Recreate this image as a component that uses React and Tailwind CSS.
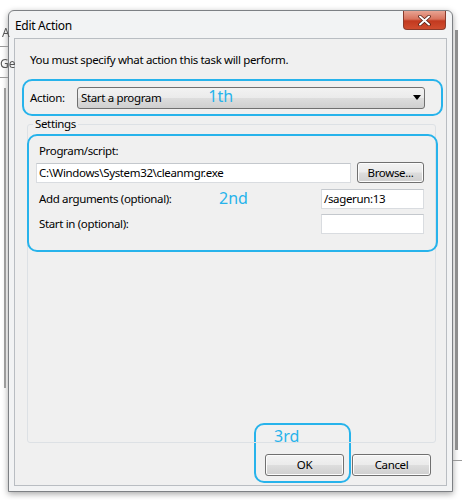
import React from 'react';

const ui = { fontFamily: '"Noto Sans", "Open Sans", sans-serif' };

function Win7Button({ children, className = '' }) {
    return (
        <div
            className={`flex items-center justify-center rounded-[3px] border border-[#707070] bg-[linear-gradient(#f3f3f3_0%,#ebebeb_48%,#dddddd_52%,#cfcfcf_100%)] text-black shadow-[inset_0_0_0_1px_#fcfcfc] ${className}`}
        >
            {children}
        </div>
    );
}

function TextBox({ value, className = '' }) {
    return (
        <div className={`flex items-center border border-[#d9dce0] border-t-[#c4c8cd] bg-white pl-[2px] text-black ${className}`}>
            {value}
        </div>
    );
}

function Mark({ children, className = '' }) {
    return <span className={`text-[16px] leading-none tracking-normal text-[#27b3eb] ${className}`}>{children}</span>;
}

function EditAction() {
    return (
        <div className="flex h-[482px] w-[445px] flex-col rounded-t-[6px] border border-[#7d8084] bg-[#f2f3f4] shadow-[0_2px_6px_rgba(0,0,0,0.35)]">
            {/* title bar */}
            <div className="flex h-[27px] shrink-0 items-start justify-between pl-[6px] pr-[6px]">
                <span className="pt-[7px] text-[12px] leading-[16px] tracking-[-0.3px] text-black">Edit Action</span>
                <div className="flex h-[19px] w-[43px] items-center justify-center rounded-b-[4px] border border-t-0 border-[#8a3b2c] bg-[linear-gradient(#e8a493_0%,#d8735d_45%,#c2391f_55%,#d04d2f_100%)]">
                    <svg width="13" height="11" viewBox="0 0 13 11">
                        <path d="M2 1.5 L11 9.5 M11 1.5 L2 9.5" stroke="#4a1a10" strokeWidth="3.4" strokeLinecap="round" />
                        <path d="M2 1.5 L11 9.5 M11 1.5 L2 9.5" stroke="#ffffff" strokeWidth="2" strokeLinecap="round" />
                    </svg>
                </div>
            </div>

            {/* client area */}
            <div className="mx-[5px] mb-[5px] flex flex-1 flex-col border border-[#b9bdc2] bg-[#f0f0f0] text-[11.5px] tracking-[-0.35px] text-black">
                <p className="pl-[15px] pt-[13px] leading-[16px]">You must specify what action this task will perform.</p>

                <div className="ml-[7px] mr-[3px] mt-[11px] flex h-[37px] items-center rounded-[10px] border-2 border-[#27b3eb] pl-[6px] pr-[16px]">
                    <span className="w-[47px]">Action:</span>
                    <div className="relative flex h-[22px] flex-1 items-center rounded-[3px] border border-[#707070] bg-[linear-gradient(#f2f2f2_0%,#ebebeb_48%,#dddddd_52%,#cfcfcf_100%)] pl-[3px]">
                        <span>Start a program</span>
                        <Mark className="ml-[47px] -mt-[4px]">1th</Mark>
                        <svg className="ml-auto mr-[3px]" width="8" height="5" viewBox="0 0 8 5">
                            <path d="M0 0 H8 L4 5 Z" fill="#000" />
                        </svg>
                    </div>
                </div>

                {/* settings group */}
                <div className="relative ml-[12px] mr-[10px] mt-[8px] h-[319px] rounded-[3px] border border-[#dde1e5] pt-[9px]">
                    <span className="absolute -top-[9px] left-[5px] bg-[#f0f0f0] px-[2px] leading-[16px]">Settings</span>
                    <div className="-ml-[1px] -mr-[3px] flex h-[118px] flex-col rounded-[10px] border-2 border-[#27b3eb] pl-[7px] pr-[12px] pt-[7px]">
                        <span className="ml-[3px] leading-[16px]">Program/script:</span>
                        <div className="mt-[3px] flex items-center">
                            <TextBox value="C:\Windows\System32\cleanmgr.exe" className="h-[20px] w-[315px]" />
                            <Win7Button className="ml-[6px] h-[21px] flex-1">Browse...</Win7Button>
                        </div>
                        <div className="mt-[6px] flex h-[20px] items-center">
                            <span className="ml-[3px] w-[180px]">Add arguments (optional):</span>
                            <Mark className="-mt-[2px]">2nd</Mark>
                            <TextBox value="/sagerun:13" className="ml-auto h-[20px] w-[103px]" />
                        </div>
                        <div className="mt-[5px] flex h-[20px] items-center">
                            <span className="ml-[3px]">Start in (optional):</span>
                            <TextBox value="" className="ml-auto h-[20px] w-[103px]" />
                        </div>
                    </div>
                </div>

                {/* buttons */}
                <div className="mr-[15px] flex items-end justify-end">
                    <div className="-mt-[20px] flex h-[60px] w-[97px] flex-col rounded-[10px] border-2 border-[#27b3eb] pl-[9px] pr-[5px] pt-[3px]">
                        <Mark className="ml-[9px]">3rd</Mark>
                        <Win7Button className="mt-[10px] h-[22px] w-[79px]">OK</Win7Button>
                    </div>
                    <Win7Button className="mb-[7px] ml-[1px] h-[22px] w-[79px]">Cancel</Win7Button>
                </div>
            </div>
        </div>
    );
}

export default function App() {
    return (
        <div className="flex h-[500px] w-[462px] overflow-hidden bg-white" style={ui}>
            {/* blurred window behind, left */}
            <div className="relative flex w-[8px] shrink-0 flex-col pt-[12px]">
                <span className="pl-[2px] pt-[12px] text-[12px] text-[#555] blur-[0.6px]">A</span>
                <div className="mt-[4px] h-px bg-[#9a9a9a]" />
                <span className="pt-[8px] text-[12px] text-[#555] blur-[0.6px]">Ge</span>
                <div className="mt-[4px] h-px bg-[#9a9a9a]" />
                <div className="ml-[4px] mt-[10px] h-[300px] w-[2px] bg-[#9c9c9c]" />
            </div>
            <div className="pt-[10px]">
                <EditAction />
            </div>
            <div className="flex w-[9px] shrink-0 flex-col pt-[30px]">
                <div className="ml-[2px] h-[420px] w-[3px] bg-[#8e8e8e]" />
                <div className="mt-[10px] h-px bg-[#9a9a9a]" />
            </div>
        </div>
    );
}
